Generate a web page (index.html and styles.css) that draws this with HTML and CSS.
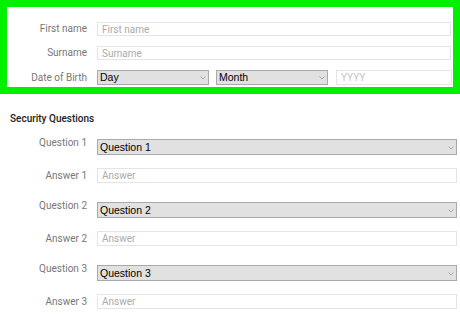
FILE: index.html
```html
<!DOCTYPE html>
<html>

<head>
    <title>Register</title>
    <link rel="stylesheet" href="styles.css">
</head>

<body>
    <div class="basic">
        <div class="row">
            <label>First name</label>
            <input type="text" placeholder="First name">
        </div>
        <div class="row">
            <label>Surname</label>
            <input type="text" placeholder="Surname">
        </div>
        <div class="row">
            <label>Date of Birth</label>
            <div class="dob">
                <div class="sel">
                    <select><option>Day</option></select>
                    <svg class="chev" width="6" height="4" viewBox="0 0 6 4"><path d="M0.5 0.5 L3 3 L5.5 0.5" /></svg>
                </div>
                <div class="sel">
                    <select><option>Month</option></select>
                    <svg class="chev" width="6" height="4" viewBox="0 0 6 4"><path d="M0.5 0.5 L3 3 L5.5 0.5" /></svg>
                </div>
                <input type="text" class="year" placeholder="YYYY">
            </div>
        </div>
    </div>

    <div class="security">
        <h4>Security Questions</h4>

        <div class="row q">
            <label>Question 1</label>
            <div class="sel">
                <select><option>Question 1</option></select>
                <svg class="chev" width="6" height="4" viewBox="0 0 6 4"><path d="M0.5 0.5 L3 3 L5.5 0.5" /></svg>
            </div>
        </div>
        <div class="row a">
            <label>Answer 1</label>
            <input type="text" placeholder="Answer">
        </div>

        <div class="row q">
            <label>Question 2</label>
            <div class="sel">
                <select><option>Question 2</option></select>
                <svg class="chev" width="6" height="4" viewBox="0 0 6 4"><path d="M0.5 0.5 L3 3 L5.5 0.5" /></svg>
            </div>
        </div>
        <div class="row a">
            <label>Answer 2</label>
            <input type="text" placeholder="Answer">
        </div>

        <div class="row q">
            <label>Question 3</label>
            <div class="sel">
                <select><option>Question 3</option></select>
                <svg class="chev" width="6" height="4" viewBox="0 0 6 4"><path d="M0.5 0.5 L3 3 L5.5 0.5" /></svg>
            </div>
        </div>
        <div class="row a">
            <label>Answer 3</label>
            <input type="text" placeholder="Answer">
        </div>
    </div>
</body>

</html>
```

FILE: styles.css
```css
body {
    margin: 0;
    background-color: #fff;
    font-family: Roboto, "Liberation Sans", sans-serif;
}

.basic {
    box-sizing: border-box;
    border: 7px solid #00f000;
    height: 94px;
    padding: 15px 2px 0 0;
    display: flex;
    flex-direction: column;
    gap: 10px;
}

.row {
    display: flex;
    align-items: center;
    gap: 10px;
}

.row label {
    flex: 0 0 80px;
    text-align: right;
    font-size: 10px;
    line-height: 12px;
    color: #777;
}

.row > input,
.row > .sel {
    flex: 1;
    min-width: 0;
}

input {
    display: block;
    box-sizing: border-box;
    height: 14px;
    margin: 0;
    border: 1px solid #e4e4e4;
    padding: 0 4px;
    font-family: Roboto, sans-serif;
    font-size: 10px;
    color: #333;
    outline: none;
}

input::placeholder {
    color: #aaa;
}

.dob {
    flex: 1;
    min-width: 0;
    display: grid;
    grid-template-columns: 112px 112px minmax(0, 1fr);
    align-items: center;
    gap: 7px;
}

.dob .year {
    width: 100%;
    margin-left: 1px;
    height: 15px;
}

.dob .year::placeholder {
    color: #c4c4c4;
}

.sel {
    position: relative;
}

select {
    display: block;
    appearance: none;
    -webkit-appearance: none;
    box-sizing: border-box;
    width: 100%;
    height: 15px;
    margin: 0;
    border: 1px solid #a9a9a9;
    border-radius: 0;
    background-color: #e1e1e1;
    padding: 0 2px;
    font-family: "Liberation Sans", Arial, sans-serif;
    font-size: 10.5px;
    line-height: 13px;
    color: #000;
    outline: none;
}

.chev {
    position: absolute;
    right: 3px;
    top: 6px;
    fill: none;
    stroke: #999;
    stroke-width: 0.8;
}

.security {
    padding: 19px 3px 0 0;
}

.security h4 {
    margin: 0 0 0 10px;
    font-size: 10px;
    line-height: 12px;
    font-weight: 500;
    color: #222;
}

.security .row label {
    flex-basis: 87px;
}

.row.q {
    align-items: flex-start;
    margin-top: 19px;
}

.row.q label {
    margin-top: -2px;
}

.security h4 + .row.q {
    margin-top: 14px;
}

.row.q select {
    height: 16px;
}

.row.q .chev {
    top: 7px;
}

.row.a {
    margin-top: 13px;
}

.row.a input {
    height: 15px;
}
```
